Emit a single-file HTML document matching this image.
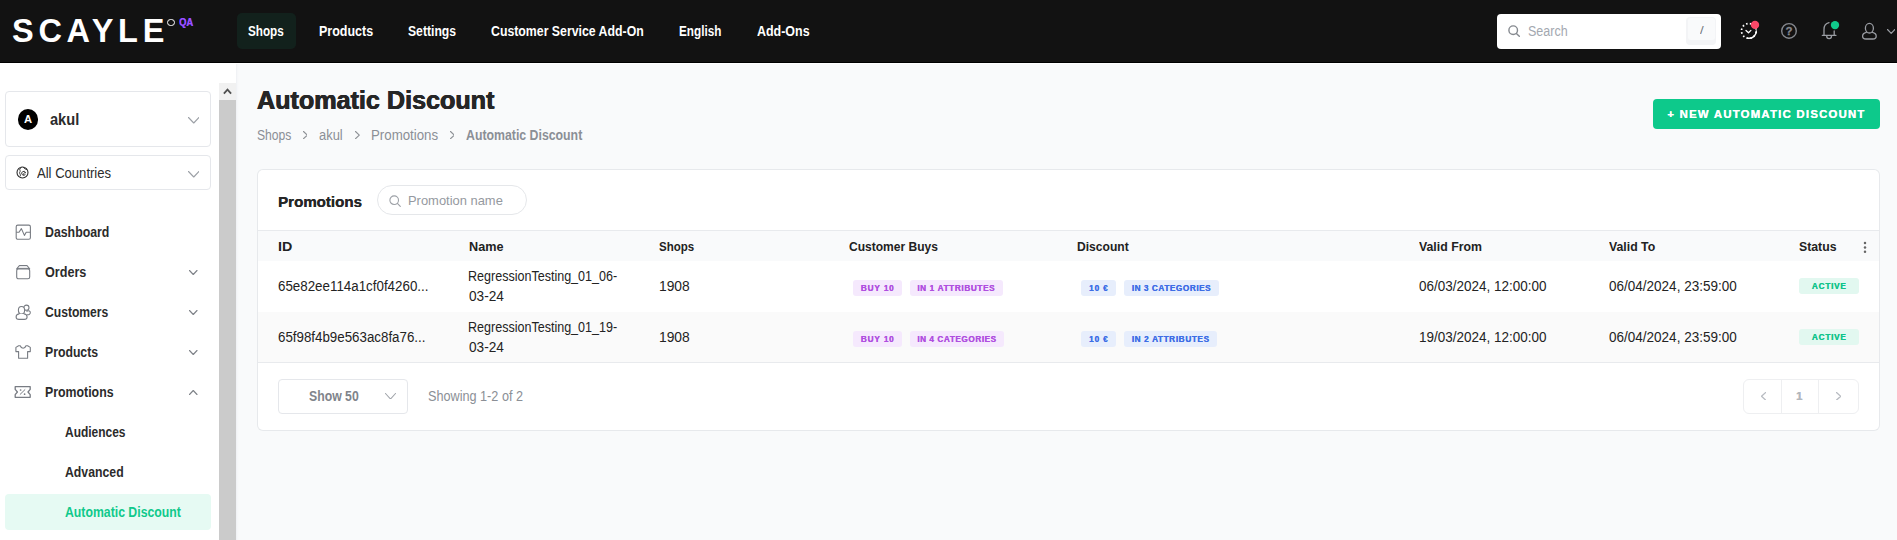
<!DOCTYPE html>
<html lang="en"><head><meta charset="utf-8"><title>Automatic Discount</title>
<style>
*{box-sizing:border-box;margin:0;padding:0}
html,body{width:1897px;height:540px;overflow:hidden;background:#fff;font-family:'Liberation Sans',sans-serif;}
.a{position:absolute;display:block}
.t{position:absolute;display:block;white-space:pre;transform-origin:0 50%;text-decoration:none;font-family:'Liberation Sans',sans-serif}
header{position:absolute;left:0;top:0;width:1897px;height:63px;background:#121212;border-bottom:1px solid #000;z-index:2}
aside{position:absolute;left:0;top:62px;width:236px;height:478px;background:#fff}
.sbar{position:absolute;left:219px;top:21px;width:17px;height:457px;background:#cbcbcb}
.sbar i{position:absolute;left:0;top:0;width:17px;height:17px;background:#f1f1f1}
main{position:absolute;left:236px;top:62px;width:1661px;height:478px;background:linear-gradient(#fff 0,#fff 2px,transparent 2px),linear-gradient(90deg,#eef0f3 0,#f6f7f9 1.5px,#f9fafb 3px)}
.box{position:absolute;border:1px solid #e5e7eb;border-radius:4px;background:#fff}
.card{position:absolute;left:22px;top:108px;width:1621px;height:260px;background:#fff;border-radius:5px;box-shadow:0 0 0 1px #e7e9ec}
.bdg{position:absolute;display:block;border-radius:3px}
table{margin-top:60px;width:1621px;border-collapse:separate;border-spacing:0;table-layout:fixed}
th,td{padding:0;font-weight:400}
thead th{height:31px;background:#f9fafb;border-top:1px solid #e8eaed}
tbody td{height:51px}
tbody tr+tr td{height:51px;background:#fafafa;border-bottom:1px solid #e8eaed}
</style></head><body>
<header>
  <span class="t" style="left:12.00px;top:15.09px;font-size:32.5px;line-height:32.5px;font-weight:700;color:#fff;letter-spacing:4.700px;">SCAYLE</span>
  <span class="a" style="left:167.4px;top:18.8px;width:7.2px;height:7.2px;border:1.3px solid #fff;border-radius:50%"></span>
  <span class="t" style="left:178.55px;top:18.48px;font-size:10.3px;line-height:10.3px;font-weight:700;color:#a24dff;transform:scaleX(0.9085);text-shadow:0.6px 0 0 #4f46e5;">QA</span>
  <nav>
    <span class="a" style="left:237px;top:13px;width:59px;height:36px;border-radius:5px;background:#12211c"></span>
    <a class="t" style="left:248.48px;top:24.25px;font-size:14px;line-height:14px;font-weight:700;color:#fff;transform:scaleX(0.8359);">Shops</a><a class="t" style="left:319.11px;top:24.25px;font-size:14px;line-height:14px;font-weight:700;color:#fff;transform:scaleX(0.8915);">Products</a><a class="t" style="left:407.96px;top:24.25px;font-size:14px;line-height:14px;font-weight:700;color:#fff;transform:scaleX(0.8700);">Settings</a><a class="t" style="left:491.16px;top:24.25px;font-size:14px;line-height:14px;font-weight:700;color:#fff;transform:scaleX(0.8790);">Customer Service Add-On</a><a class="t" style="left:679.26px;top:24.25px;font-size:14px;line-height:14px;font-weight:700;color:#fff;transform:scaleX(0.8369);">English</a><a class="t" style="left:756.76px;top:24.25px;font-size:14px;line-height:14px;font-weight:700;color:#fff;transform:scaleX(0.8897);">Add-Ons</a>
  </nav>
  <div class="a" style="left:1497px;top:14px;width:224px;height:35px;background:#fff;border-radius:4px"></div>
  <svg class="a" style="left:1508px;top:25px" width="12" height="12" viewBox="0 0 12 12"><circle cx="5.2" cy="5.2" r="4.3" fill="none" stroke="#85898f" stroke-width="1.4"/><path d="M8.4 8.4 L11.3 11.3" stroke="#85898f" stroke-width="1.4" stroke-linecap="round"/></svg>
  <span class="t" style="left:1527.53px;top:23.95px;font-size:14px;line-height:14px;font-weight:400;color:#a3a8b0;transform:scaleX(0.8936);">Search</span>
  <span class="a" style="left:1686px;top:17px;width:30px;height:28px;border-radius:4px;background:#f3f4f6"></span>
  <span class="a" style="left:1687.5px;top:18px;width:27px;height:22px;border-radius:3px;background:#f9fafb"></span>
  <span class="t" style="left:1699.50px;top:24.69px;font-size:11px;line-height:11px;font-weight:400;color:#6f747c;transform:scaleX(1.2000);">/</span>
  <svg class="a" style="left:1738px;top:19px" width="24" height="24" viewBox="0 0 24 24">
    <circle cx="10.9" cy="11.9" r="7.4" fill="none" stroke="#fff" stroke-width="1.7" stroke-dasharray="1.6 2.27" stroke-dashoffset="-0.3" stroke-linecap="butt" transform="rotate(95 10.9 11.9)" pathLength="46.5"/>
    <path d="M18.3 11.9 A7.4 7.4 0 0 1 9.6 19.2" fill="none" stroke="#fff" stroke-width="1.5" stroke-linecap="round"/>
    <circle cx="10.9" cy="11.9" r="9.6" fill="none" stroke="#111" stroke-width="0"/>
    <path d="M8 11.4 L10.5 13.7 L12.9 11.4" fill="none" stroke="#fff" stroke-width="1.3" stroke-linecap="round" stroke-linejoin="round"/>
    <circle cx="17" cy="5.9" r="4.2" fill="#fb4868"/>
  </svg>
  <svg class="a" style="left:1779px;top:21px" width="20" height="20" viewBox="0 0 20 20">
    <circle cx="10" cy="9.9" r="7.3" fill="none" stroke="#85888e" stroke-width="1.4"/>
    <text x="10" y="13.9" text-anchor="middle" font-family="Liberation Sans, sans-serif" font-size="11.5" font-weight="700" fill="#85888e" stroke="#85888e" stroke-width="0.3">?</text>
  </svg>
  <svg class="a" style="left:1819px;top:19px" width="22" height="22" viewBox="0 0 22 22">
    <path d="M3.3 16.3 H17 M5 16.3 V10.5 C5 6.5 7 4.2 10 3.6 M15.2 16.3 V12" fill="none" stroke="#9a9da3" stroke-width="1.3" stroke-linecap="round" stroke-linejoin="round"/>
    <path d="M7.7 17 A2.4 2.6 0 0 0 12.5 17" fill="none" stroke="#9a9da3" stroke-width="1.3"/>
    <circle cx="16" cy="6.1" r="4.2" fill="#10c98b"/>
  </svg>
  <svg class="a" style="left:1859px;top:19px" width="22" height="24" viewBox="0 0 22 24">
    <ellipse cx="10.4" cy="9.2" rx="4" ry="4.8" fill="none" stroke="#9a9da3" stroke-width="1.3"/>
    <path d="M7.3 13.4 C4.6 14 3.6 15.6 3.6 17.2 C3.6 19 5 20 7 20 H13.8 C15.8 20 17.2 19 17.2 17.2 C17.2 15.6 16.2 14 13.5 13.4" fill="none" stroke="#9a9da3" stroke-width="1.3" stroke-linecap="round"/>
  </svg>
  <svg class="a" style="left:1886.8px;top:28.8px" width="8.4" height="4.8" viewBox="0 0 8.4 4.8"><polyline points="0.5,0.5 4.2,4.3 7.9,0.5" fill="none" stroke="#9a9da3" stroke-width="1.2" stroke-linecap="round" stroke-linejoin="round"/></svg>
</header>

<aside>
  <div class="sbar"><i></i><svg class="a" style="left:4px;top:5px" width="9" height="7" viewBox="0 0 9 7"><polyline points="0.9,5.6 4.5,1.6 8.1,5.6" fill="none" stroke="#505050" stroke-width="1.8"/></svg></div>
  <div class="box" style="left:5px;top:29px;width:206px;height:56px"></div>
  <span class="a" style="left:17.6px;top:47.2px;width:20.6px;height:20.6px;border-radius:50%;background:#000"></span>
  <span class="t" style="left:24.34px;top:52.43px;font-size:10.6px;line-height:10.6px;font-weight:700;color:#fff;transform:scaleX(1.0571);">A</span><span class="t" style="left:49.94px;top:49.66px;font-size:16px;line-height:16px;font-weight:700;color:#2b2b2b;transform:scaleX(0.9124);">akul</span>
  <svg class="a" style="left:187.5px;top:55px" width="11.5" height="6.5" viewBox="0 0 11.5 6.5"><polyline points="0.5,0.5 5.75,6.0 11.0,0.5" fill="none" stroke="#9ca0a6" stroke-width="1.1" stroke-linecap="round" stroke-linejoin="round"/></svg>
  <div class="box" style="left:5px;top:93px;width:206px;height:35px"></div>
  <svg class="a" style="left:15.6px;top:104.4px" width="13" height="13" viewBox="0 0 13 13"><circle cx="6.5" cy="6.5" r="5.5" fill="none" stroke="#2e2e2e" stroke-width="1.1"/><path d="M5.3 1.5 C3.7 2.6 3.3 3.6 4.1 4.6 C4.7 5.4 3.3 6.1 3.6 7.1 C3.9 8.1 4.7 8.5 4.4 9.8 M7.4 1.4 C8.2 2.8 9.4 3.1 10.6 3.5" fill="none" stroke="#2e2e2e" stroke-width="0.95" stroke-linecap="round"/><path d="M9.6 6.6 A2 2 0 1 0 9.4 8.4 M7.6 8.4 C7.4 7.4 8 6.8 8.8 6.6" fill="none" stroke="#2e2e2e" stroke-width="0.95" stroke-linecap="round"/></svg>
  <span class="t" style="left:36.50px;top:104.05px;font-size:14px;line-height:14px;font-weight:400;color:#2b2b2b;transform:scaleX(0.9333);">All Countries</span>
  <svg class="a" style="left:187.5px;top:109px" width="11.5" height="6.5" viewBox="0 0 11.5 6.5"><polyline points="0.5,0.5 5.75,6.0 11.0,0.5" fill="none" stroke="#9ca0a6" stroke-width="1.1" stroke-linecap="round" stroke-linejoin="round"/></svg>
  <nav>
  <svg class="a" style="left:15px;top:162px" width="17" height="16" viewBox="0 0 17 16"><rect x="1.2" y="1.1" width="14.2" height="14.2" rx="1.6" fill="none" stroke="#787c83" stroke-width="1.1"/><path d="M1.2 8.3 H4 L6.4 4.6 L9.4 11.4 L11.2 8.3 H15.4" fill="none" stroke="#787c83" stroke-width="1.1" stroke-linejoin="round"/></svg>
  <span class="t" style="left:44.92px;top:163.35px;font-size:14px;line-height:14px;font-weight:700;color:#2b2b2b;transform:scaleX(0.8800);">Dashboard</span>
  <svg class="a" style="left:15px;top:202px" width="17" height="16" viewBox="0 0 17 16"><path d="M1.7 4.9 L4.4 1.5 H12 L14.7 4.9 Z" fill="#ececee" stroke="#787c83" stroke-width="1.1" stroke-linejoin="round"/><rect x="1.7" y="4.9" width="13" height="9.9" rx="1.8" fill="#fff" stroke="#787c83" stroke-width="1.1"/></svg>
  <span class="t" style="left:44.75px;top:203.35px;font-size:14px;line-height:14px;font-weight:700;color:#2b2b2b;transform:scaleX(0.9006);">Orders</span><svg class="a" style="left:189px;top:208px" width="8.5" height="5" viewBox="0 0 8.5 5"><polyline points="0.5,0.5 4.25,4.5 8.0,0.5" fill="none" stroke="#7d8187" stroke-width="1.1" stroke-linecap="round" stroke-linejoin="round"/></svg>
  <svg class="a" style="left:15.2px;top:240.5px" width="17" height="17" viewBox="0 0 17 17"><circle cx="11.4" cy="4.7" r="2.6" fill="none" stroke="#787c83" stroke-width="1.05"/><path d="M11.8 8.2 C13.8 7 15.6 8.2 15.3 10 C15.1 11.4 13.6 11.9 12.4 11.7" fill="none" stroke="#787c83" stroke-width="1.05" stroke-linecap="round"/><ellipse cx="6.5" cy="7.3" rx="3.1" ry="3.8" fill="#fff" stroke="#787c83" stroke-width="1.1"/><path d="M4 10.9 C2 11.3 1.1 12.6 1.1 13.9 C1.1 15.6 2.4 16.4 4 16.4 H9.2 C10.8 16.4 12.1 15.6 12.1 13.9 C12.1 12.6 11.2 11.3 9.2 10.9" fill="#fff" stroke="#787c83" stroke-width="1.1" stroke-linecap="round"/></svg>
  <span class="t" style="left:45.07px;top:243.35px;font-size:14px;line-height:14px;font-weight:700;color:#2b2b2b;transform:scaleX(0.8653);">Customers</span><svg class="a" style="left:189px;top:248px" width="8.5" height="5" viewBox="0 0 8.5 5"><polyline points="0.5,0.5 4.25,4.5 8.0,0.5" fill="none" stroke="#7d8187" stroke-width="1.1" stroke-linecap="round" stroke-linejoin="round"/></svg>
  <svg class="a" style="left:15px;top:282px" width="17" height="16" viewBox="0 0 17 16"><path d="M5.2 1.8 H3.6 L0.9 3.4 V7.6 H3.6 V14.3 H12.6 V7.6 H15.3 V3.4 L12.6 1.8 H11 C10.4 3.4 9.4 4.3 8.1 4.3 C6.8 4.3 5.8 3.4 5.2 1.8 Z" fill="none" stroke="#787c83" stroke-width="1.1" stroke-linejoin="round"/></svg>
  <span class="t" style="left:44.63px;top:283.35px;font-size:14px;line-height:14px;font-weight:700;color:#2b2b2b;transform:scaleX(0.8746);">Products</span><svg class="a" style="left:189px;top:288px" width="8.5" height="5" viewBox="0 0 8.5 5"><polyline points="0.5,0.5 4.25,4.5 8.0,0.5" fill="none" stroke="#7d8187" stroke-width="1.1" stroke-linecap="round" stroke-linejoin="round"/></svg>
  <svg class="a" style="left:14px;top:323px" width="18" height="14" viewBox="0 0 18 14"><path d="M1.2 1.7 H16.2 V4.4 L14 7 L16.2 9.6 V12.3 H1.2 V9.6 L3.4 7 L1.2 4.4 Z" fill="none" stroke="#787c83" stroke-width="1.3" stroke-linejoin="round"/><path d="M6.2 9.3 L10.9 4.7" stroke="#787c83" stroke-width="1" stroke-linecap="round"/><circle cx="6.6" cy="5" r="0.85" fill="#787c83"/><circle cx="10.6" cy="9.2" r="0.85" fill="#787c83"/></svg>
  <span class="t" style="left:44.62px;top:323.35px;font-size:14px;line-height:14px;font-weight:700;color:#2b2b2b;transform:scaleX(0.8813);">Promotions</span><svg class="a" style="left:189px;top:327.5px" width="8.5" height="5" viewBox="0 0 8.5 5"><polyline points="0.5,4.5 4.25,0.5 8.0,4.5" fill="none" stroke="#7d8187" stroke-width="1.1" stroke-linecap="round" stroke-linejoin="round"/></svg>
  <span class="t" style="left:65.07px;top:363.35px;font-size:14px;line-height:14px;font-weight:700;color:#2b2b2b;transform:scaleX(0.8545);">Audiences</span><span class="t" style="left:65.06px;top:403.35px;font-size:14px;line-height:14px;font-weight:700;color:#2b2b2b;transform:scaleX(0.8763);">Advanced</span>
  <span class="a" style="left:5px;top:432px;width:206px;height:36px;border-radius:4px;background:#e6faf3"></span>
  <span class="t" style="left:65.06px;top:443.35px;font-size:14px;line-height:14px;font-weight:700;color:#10c98b;transform:scaleX(0.8760);">Automatic Discount</span>
  </nav>
</aside>

<main>
  <h1 class="t" style="left:21.06px;top:26.33px;font-size:25.6px;line-height:25.6px;font-weight:700;color:#262626;transform:scaleX(0.9823);text-shadow:0.4px 0 0 #262626,-0.4px 0 0 #262626;">Automatic Discount</h1>
  <nav><span class="t" style="left:20.55px;top:65.75px;font-size:14px;line-height:14px;font-weight:400;color:#8b8f96;transform:scaleX(0.8675);">Shops</span><svg class="a" style="left:66.70000000000002px;top:68.80000000000001px" width="4.8" height="8.2" viewBox="0 0 4.8 8.2"><polyline points="0.5,0.5 4.3,4.1 0.5,7.699999999999999" fill="none" stroke="#8e9196" stroke-width="1.15" stroke-linecap="round" stroke-linejoin="round"/></svg><span class="t" style="left:83.44px;top:65.75px;font-size:14px;line-height:14px;font-weight:400;color:#8b8f96;transform:scaleX(0.9237);">akul</span><svg class="a" style="left:118.9px;top:68.80000000000001px" width="4.8" height="8.2" viewBox="0 0 4.8 8.2"><polyline points="0.5,0.5 4.3,4.1 0.5,7.699999999999999" fill="none" stroke="#8e9196" stroke-width="1.15" stroke-linecap="round" stroke-linejoin="round"/></svg><span class="t" style="left:134.62px;top:65.75px;font-size:14px;line-height:14px;font-weight:400;color:#8b8f96;transform:scaleX(0.9478);">Promotions</span><svg class="a" style="left:213.70000000000002px;top:68.80000000000001px" width="4.8" height="8.2" viewBox="0 0 4.8 8.2"><polyline points="0.5,0.5 4.3,4.1 0.5,7.699999999999999" fill="none" stroke="#8e9196" stroke-width="1.15" stroke-linecap="round" stroke-linejoin="round"/></svg><span class="t" style="left:229.56px;top:65.75px;font-size:14px;line-height:14px;font-weight:700;color:#8b8f96;transform:scaleX(0.8791);">Automatic Discount</span></nav>
  <span class="a" style="left:1417px;top:37px;width:227px;height:30px;border-radius:4px;background:#0dc98b"></span>
  <span class="t" style="left:1431.30px;top:47.43px;font-size:11.3px;line-height:11.3px;font-weight:700;color:#fff;letter-spacing:1.270px;text-shadow:0.3px 0 0 #fff;">+ NEW AUTOMATIC DISCOUNT</span>
  <section class="card">
    <h2 class="t" style="left:19.93px;top:23.58px;font-size:15.5px;line-height:15.5px;font-weight:700;color:#262626;transform:scaleX(0.9728);text-shadow:0.3px 0 0 #262626;">Promotions</h2>
    <span class="a" style="left:119px;top:15px;width:150px;height:30px;border:1px solid #e5e7ea;border-radius:15px;background:#fff"></span>
    <svg class="a" style="left:130.5px;top:25.3px" width="12" height="12" viewBox="0 0 12 12"><circle cx="5.2" cy="5.2" r="4.3" fill="none" stroke="#9ca0a6" stroke-width="1.1"/><path d="M8.4 8.4 L11.3 11.3" stroke="#9ca0a6" stroke-width="1.1" stroke-linecap="round"/></svg>
    <span class="t" style="left:150.11px;top:23.80px;font-size:13px;line-height:13px;font-weight:400;color:#9599a0;transform:scaleX(0.9941);">Promotion name</span>
    <table>
      <thead><tr><th><span class="t" style="left:19.88px;top:69.60px;font-size:13px;line-height:13px;font-weight:700;color:#222;transform:scaleX(1.0979);">ID</span></th><th><span class="t" style="left:210.97px;top:69.60px;font-size:13px;line-height:13px;font-weight:700;color:#222;transform:scaleX(0.9723);">Name</span></th><th><span class="t" style="left:400.86px;top:69.60px;font-size:13px;line-height:13px;font-weight:700;color:#222;transform:scaleX(0.8852);">Shops</span></th><th><span class="t" style="left:590.84px;top:69.60px;font-size:13px;line-height:13px;font-weight:700;color:#222;transform:scaleX(0.9263);">Customer Buys</span></th><th><span class="t" style="left:819.00px;top:69.60px;font-size:13px;line-height:13px;font-weight:700;color:#222;transform:scaleX(0.9297);">Discount</span></th><th><span class="t" style="left:1161.06px;top:69.60px;font-size:13px;line-height:13px;font-weight:700;color:#222;transform:scaleX(0.9466);">Valid From</span></th><th><span class="t" style="left:1350.76px;top:69.60px;font-size:13px;line-height:13px;font-weight:700;color:#222;transform:scaleX(0.9458);">Valid To</span></th><th><span class="t" style="left:1540.73px;top:69.60px;font-size:13px;line-height:13px;font-weight:700;color:#222;transform:scaleX(0.9445);">Status</span></th></tr></thead>
      <tbody>
      <tr><td><span class="t" style="left:19.68px;top:109.25px;font-size:14px;line-height:14px;font-weight:400;color:#232323;transform:scaleX(0.9535);">65e82ee114a1cf0f4260...</span></td><td><span class="t" style="left:210.38px;top:98.75px;font-size:14px;line-height:14px;font-weight:400;color:#232323;transform:scaleX(0.8953);">RegressionTesting_01_06-</span><span class="t" style="left:211.01px;top:118.75px;font-size:14px;line-height:14px;font-weight:400;color:#232323;transform:scaleX(0.9755);">03-24</span></td><td><span class="t" style="left:400.51px;top:109.25px;font-size:14px;line-height:14px;font-weight:400;color:#232323;transform:scaleX(0.9864);">1908</span></td><td><span class="bdg" style="left:595.0px;top:110.0px;width:49.0px;height:16.0px;background:#f5e9fd"><span class="t" style="left:7.70px;top:4.66px;font-size:8.2px;line-height:8.2px;font-weight:700;color:#b04fe0;letter-spacing:0.890px;text-shadow:0.25px 0 0 #b04fe0;">BUY 10</span></span><span class="bdg" style="left:652.0px;top:110.0px;width:93.0px;height:16.0px;background:#f5e9fd"><span class="t" style="left:7.20px;top:4.66px;font-size:8.2px;line-height:8.2px;font-weight:700;color:#b04fe0;letter-spacing:0.650px;text-shadow:0.25px 0 0 #b04fe0;">IN 1 ATTRIBUTES</span></span></td><td><span class="bdg" style="left:823.2px;top:110.0px;width:34.6px;height:16.0px;background:#e7eefc"><span class="t" style="left:7.90px;top:4.66px;font-size:8.2px;line-height:8.2px;font-weight:700;color:#3e6ee6;letter-spacing:0.850px;text-shadow:0.25px 0 0 #3e6ee6;">10 €</span></span><span class="bdg" style="left:866.0px;top:110.0px;width:94.8px;height:16.0px;background:#e7eefc"><span class="t" style="left:7.70px;top:4.66px;font-size:8.2px;line-height:8.2px;font-weight:700;color:#3e6ee6;letter-spacing:0.571px;text-shadow:0.25px 0 0 #3e6ee6;">IN 3 CATEGORIES</span></span></td><td><span class="t" style="left:1160.82px;top:109.25px;font-size:14px;line-height:14px;font-weight:400;color:#232323;transform:scaleX(0.9630);">06/03/2024, 12:00:00</span></td><td><span class="t" style="left:1350.52px;top:109.25px;font-size:14px;line-height:14px;font-weight:400;color:#232323;transform:scaleX(0.9653);">06/04/2024, 23:59:00</span></td><td><span class="bdg" style="left:1541.0px;top:108.0px;width:60.0px;height:16.0px;background:#e2f8f0"><span class="t" style="left:12.85px;top:4.96px;font-size:8.2px;line-height:8.2px;font-weight:700;color:#12c48a;letter-spacing:0.760px;text-shadow:0.25px 0 0 #12c48a;">ACTIVE</span></span></td></tr>
      <tr><td><span class="t" style="left:19.69px;top:160.15px;font-size:14px;line-height:14px;font-weight:400;color:#232323;transform:scaleX(0.9519);">65f98f4b9e563ac8fa76...</span></td><td><span class="t" style="left:210.38px;top:149.55px;font-size:14px;line-height:14px;font-weight:400;color:#232323;transform:scaleX(0.8953);">RegressionTesting_01_19-</span><span class="t" style="left:211.01px;top:169.85px;font-size:14px;line-height:14px;font-weight:400;color:#232323;transform:scaleX(0.9755);">03-24</span></td><td><span class="t" style="left:400.51px;top:160.15px;font-size:14px;line-height:14px;font-weight:400;color:#232323;transform:scaleX(0.9864);">1908</span></td><td><span class="bdg" style="left:595.0px;top:161.0px;width:49.0px;height:16.0px;background:#f5e9fd"><span class="t" style="left:7.70px;top:4.66px;font-size:8.2px;line-height:8.2px;font-weight:700;color:#b04fe0;letter-spacing:0.890px;text-shadow:0.25px 0 0 #b04fe0;">BUY 10</span></span><span class="bdg" style="left:652.0px;top:161.0px;width:93.9px;height:16.0px;background:#f5e9fd"><span class="t" style="left:7.20px;top:4.66px;font-size:8.2px;line-height:8.2px;font-weight:700;color:#b04fe0;letter-spacing:0.571px;text-shadow:0.25px 0 0 #b04fe0;">IN 4 CATEGORIES</span></span></td><td><span class="bdg" style="left:823.2px;top:161.0px;width:34.6px;height:16.0px;background:#e7eefc"><span class="t" style="left:7.90px;top:4.66px;font-size:8.2px;line-height:8.2px;font-weight:700;color:#3e6ee6;letter-spacing:0.850px;text-shadow:0.25px 0 0 #3e6ee6;">10 €</span></span><span class="bdg" style="left:866.0px;top:161.0px;width:92.9px;height:16.0px;background:#e7eefc"><span class="t" style="left:7.70px;top:4.66px;font-size:8.2px;line-height:8.2px;font-weight:700;color:#3e6ee6;letter-spacing:0.643px;text-shadow:0.25px 0 0 #3e6ee6;">IN 2 ATTRIBUTES</span></span></td><td><span class="t" style="left:1160.84px;top:160.15px;font-size:14px;line-height:14px;font-weight:400;color:#232323;transform:scaleX(0.9629);">19/03/2024, 12:00:00</span></td><td><span class="t" style="left:1350.52px;top:160.15px;font-size:14px;line-height:14px;font-weight:400;color:#232323;transform:scaleX(0.9653);">06/04/2024, 23:59:00</span></td><td><span class="bdg" style="left:1541.0px;top:159.0px;width:60.0px;height:16.0px;background:#e2f8f0"><span class="t" style="left:12.85px;top:4.96px;font-size:8.2px;line-height:8.2px;font-weight:700;color:#12c48a;letter-spacing:0.760px;text-shadow:0.25px 0 0 #12c48a;">ACTIVE</span></span></td></tr>
      </tbody>
    </table>
    <svg class="a" style="left:1605px;top:71px" width="4" height="13" viewBox="0 0 4 13"><circle cx="2" cy="2" r="1.25" fill="#666"/><circle cx="2" cy="6.4" r="1.25" fill="#666"/><circle cx="2" cy="10.8" r="1.25" fill="#666"/></svg>
    <div class="box" style="left:20px;top:209px;width:130px;height:35px;border-color:#e5e7eb"></div>
    <span class="t" style="left:50.76px;top:219.15px;font-size:14px;line-height:14px;font-weight:700;color:#80848b;transform:scaleX(0.8753);">Show 50</span>
    <svg class="a" style="left:127px;top:222.7px" width="11" height="6.5" viewBox="0 0 11 6.5"><polyline points="0.5,0.5 5.5,6.0 10.5,0.5" fill="none" stroke="#a0a4aa" stroke-width="1.1" stroke-linecap="round" stroke-linejoin="round"/></svg>
    <span class="t" style="left:169.72px;top:219.15px;font-size:14px;line-height:14px;font-weight:400;color:#8b8f96;transform:scaleX(0.9041);">Showing 1-2 of 2</span>
    <div class="box" style="left:1485px;top:209px;width:116px;height:35px;border-color:#eeeff1;border-radius:6px"></div>
    <span class="a" style="left:1523px;top:210px;width:1px;height:33px;background:#eeeff1"></span>
    <span class="a" style="left:1560px;top:210px;width:1px;height:33px;background:#eeeff1"></span>
    <svg class="a" style="left:1502.5px;top:221.5px" width="5.2" height="8.6" viewBox="0 0 5.2 8.6"><polyline points="4.7,0.5 0.5,4.3 4.7,8.1" fill="none" stroke="#b8bcc2" stroke-width="1.3" stroke-linecap="round" stroke-linejoin="round"/></svg>
    <span class="t" style="left:1538.26px;top:221.17px;font-size:11.5px;line-height:11.5px;font-weight:700;color:#b3b7bd;transform:scaleX(0.9905);text-shadow:0.3px 0 0 #b3b7bd;">1</span>
    <svg class="a" style="left:1578.3px;top:221.5px" width="5.2" height="8.6" viewBox="0 0 5.2 8.6"><polyline points="0.5,0.5 4.7,4.3 0.5,8.1" fill="none" stroke="#b8bcc2" stroke-width="1.3" stroke-linecap="round" stroke-linejoin="round"/></svg>
  </section>
</main>
</body></html>
